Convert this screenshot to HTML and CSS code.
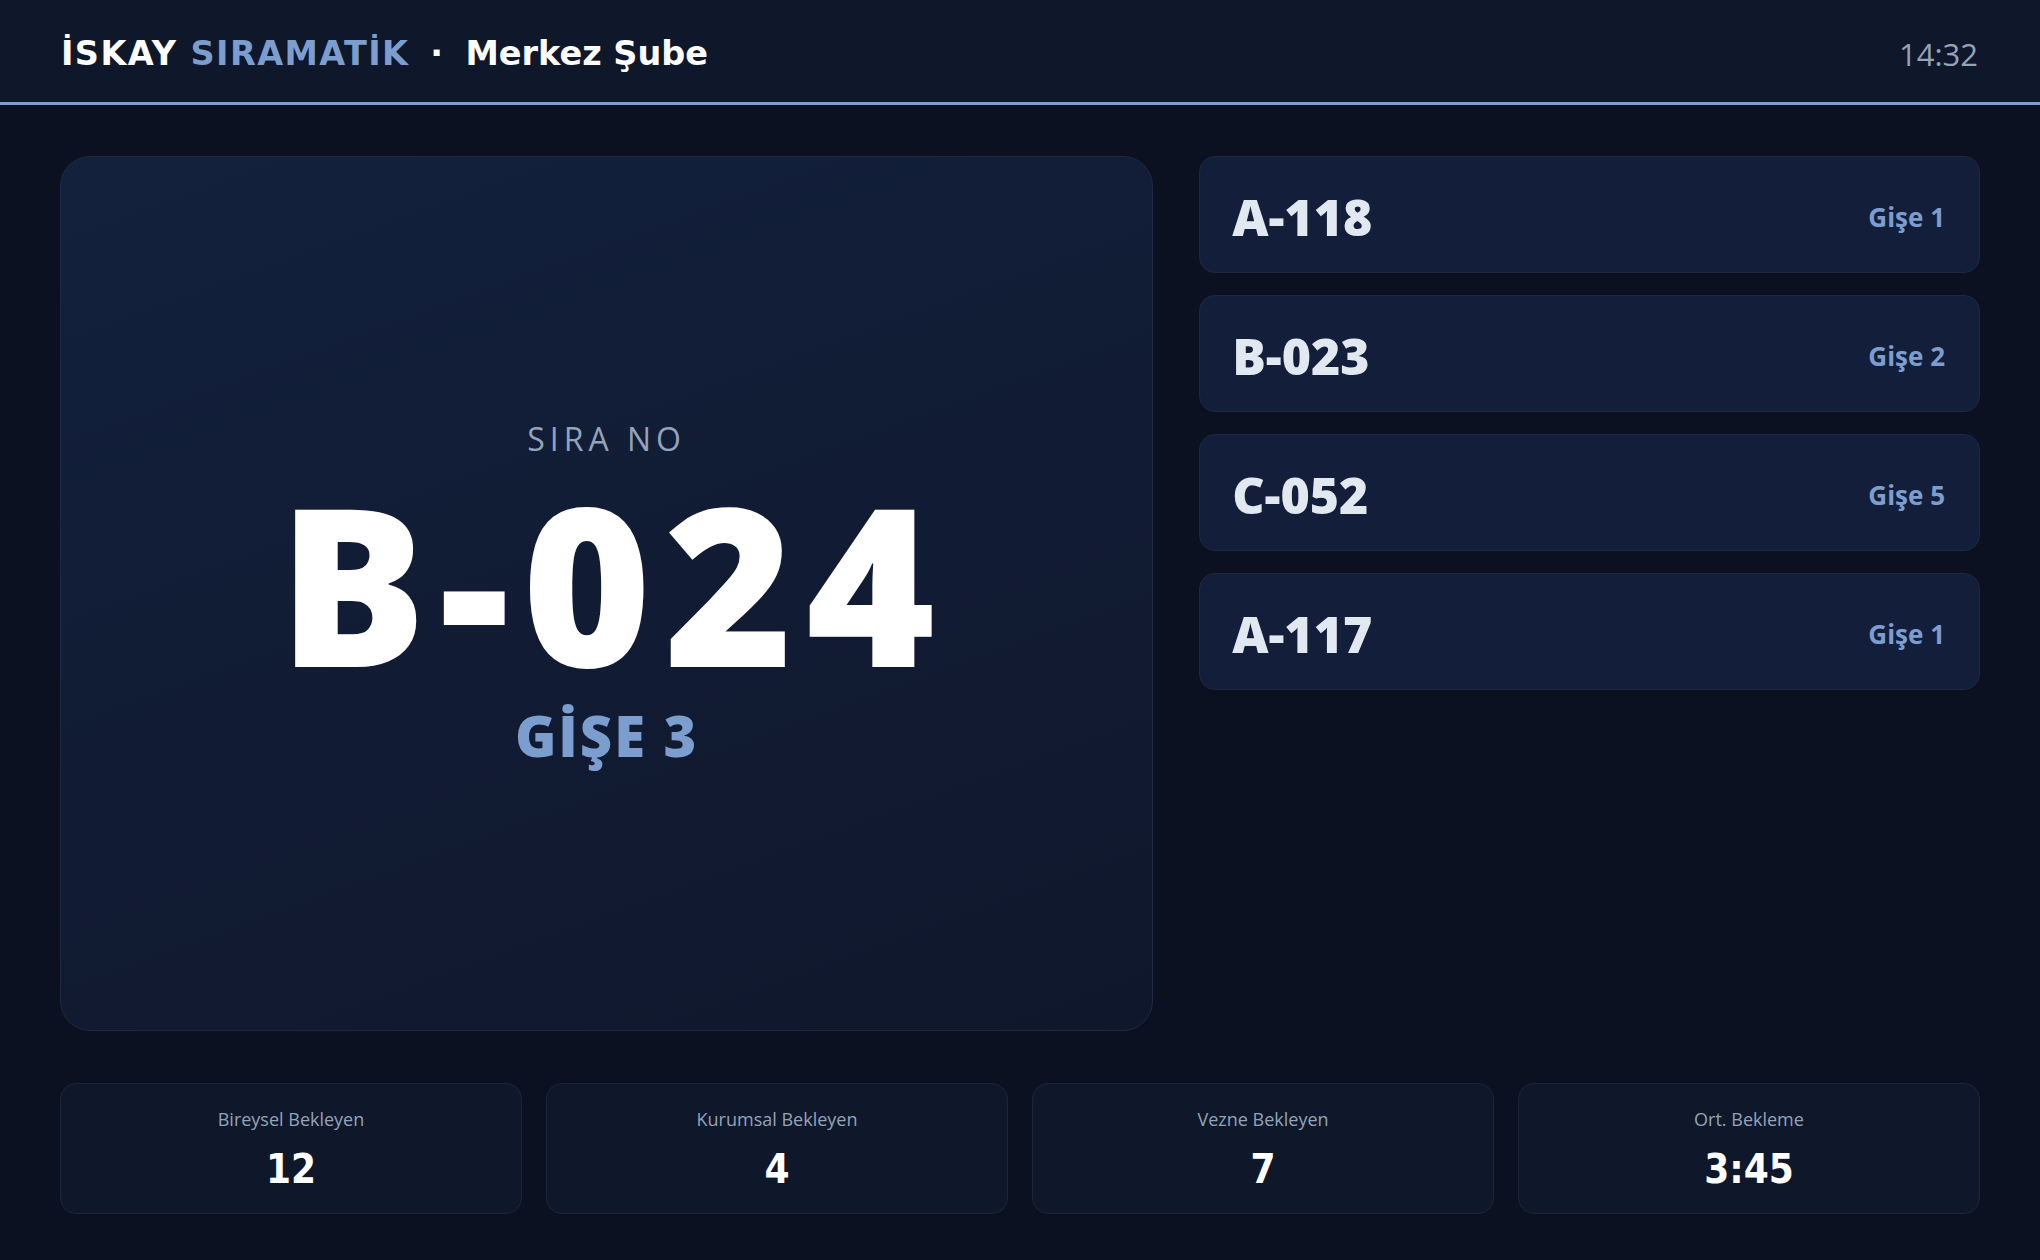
FILE: index.html
```html
<!DOCTYPE html>
<html lang="tr">
<head>
  <meta charset="UTF-8" />
  <meta name="viewport" content="width=device-width, initial-scale=1.0"/>
  <title>İSKAY Sıramatik - Merkez Şube</title>
  <link rel="stylesheet" href="styles.css">
</head>
<body>

  <header class="topbar">
    <div class="brand">
      <span class="brand-title">İSKAY <span class="brand-accent">SIRAMATİK</span></span>
      <span class="brand-dot">·</span>
      <span class="brand-branch">Merkez Şube</span>
    </div>
    <div class="clock" id="clock">14:32</div>
  </header>

  <main class="screen">
    <section class="board">
      <div class="current">
        <div class="current-label">SIRA NO</div>
        <div class="current-number">B-024</div>
        <div class="current-desk">GİŞE 3</div>
      </div>

      <ul class="history">
        <li class="history-item">
          <span class="history-number">A-118</span>
          <span class="history-desk">Gişe 1</span>
        </li>
        <li class="history-item">
          <span class="history-number">B-023</span>
          <span class="history-desk">Gişe 2</span>
        </li>
        <li class="history-item">
          <span class="history-number">C-052</span>
          <span class="history-desk">Gişe 5</span>
        </li>
        <li class="history-item">
          <span class="history-number">A-117</span>
          <span class="history-desk">Gişe 1</span>
        </li>
      </ul>
    </section>

    <section class="stats">
      <div class="stat">
        <div class="stat-label">Bireysel Bekleyen</div>
        <div class="stat-value">12</div>
      </div>
      <div class="stat">
        <div class="stat-label">Kurumsal Bekleyen</div>
        <div class="stat-value">4</div>
      </div>
      <div class="stat">
        <div class="stat-label">Vezne Bekleyen</div>
        <div class="stat-value">7</div>
      </div>
      <div class="stat">
        <div class="stat-label">Ort. Bekleme</div>
        <div class="stat-value">3:45</div>
      </div>
    </section>
  </main>

</body>
</html>
```

FILE: styles.css
```css
* {
  box-sizing: border-box;
}

html, body {
  height: 100%;
}

body {
  margin: 0;
  font-family: 'Open Sans', 'Noto Sans', sans-serif;
  background: #0b1120;
  color: #ffffff;
  display: flex;
  flex-direction: column;
  overflow: hidden;
}

/* top bar */
.topbar {
  height: 105px;
  flex-shrink: 0;
  display: flex;
  align-items: center;
  justify-content: space-between;
  padding: 5px 62px 0 61px;
  background: #0f172a;
  border-bottom: 3px solid #7c9ecf;
}

.brand {
  font-family: 'DejaVu Sans', sans-serif;
  font-weight: bold;
  font-size: 33.5px;
  color: #ffffff;
}

.brand-title {
  letter-spacing: 1.4px;
}

.brand-accent {
  color: #7c9ecf;
}

.brand-dot {
  margin: 0 11px 0 9px;
}

.clock {
  font-size: 31px;
  color: #94a3b8;
}

/* main area */
.screen {
  flex: 1;
  display: flex;
  flex-direction: column;
  gap: 52px;
  padding: 51px 60px 46px;
  min-height: 0;
}

.board {
  flex: 1;
  display: grid;
  grid-template-columns: 7fr 5fr;
  gap: 46px;
  min-height: 0;
}

.current {
  display: flex;
  flex-direction: column;
  align-items: center;
  justify-content: center;
  background: linear-gradient(160deg, #13213d 0%, #111b33 55%, #0f172c 100%);
  border: 1px solid #1f2a40;
  border-radius: 30px;
}

.current-label {
  font-size: 32px;
  letter-spacing: 5px;
  color: #94a3b8;
  line-height: 1.2;
}

.current-number {
  font-size: 220px;
  font-weight: 800;
  letter-spacing: 13px;
  line-height: 1;
  margin-top: 14px;
  margin-right: -13px;
  color: #ffffff;
}

.current-desk {
  font-size: 56px;
  font-weight: 800;
  letter-spacing: 2px;
  line-height: 1.1;
  margin-top: 13px;
  color: #7c9ecf;
}

.history {
  list-style: none;
  margin: 0;
  padding: 0;
  display: flex;
  flex-direction: column;
  gap: 22px;
}

.history-item {
  height: 117px;
  display: flex;
  align-items: center;
  justify-content: space-between;
  padding: 4px 34px 0 32px;
  background: #131f3a;
  border: 1px solid #1c2942;
  border-radius: 16px;
}

.history-number {
  font-size: 50px;
  font-weight: 800;
  color: #e2e8f0;
}

.history-desk {
  font-size: 26px;
  font-weight: 700;
  color: #7c9ecf;
}

/* bottom counters */
.stats {
  height: 131px;
  flex-shrink: 0;
  display: grid;
  grid-template-columns: repeat(4, 1fr);
  gap: 24px;
}

.stat {
  display: flex;
  flex-direction: column;
  align-items: center;
  padding-top: 23px;
  background: #0f172a;
  border: 1px solid #1c2638;
  border-radius: 16px;
}

.stat-label {
  font-size: 18px;
  color: #94a3b8;
  line-height: 1.35;
}

.stat-value {
  font-family: 'DejaVu Sans', sans-serif;
  font-weight: bold;
  font-stretch: condensed;
  font-size: 40px;
  line-height: 1.2;
  margin-top: 14px;
  color: #ffffff;
}
```
